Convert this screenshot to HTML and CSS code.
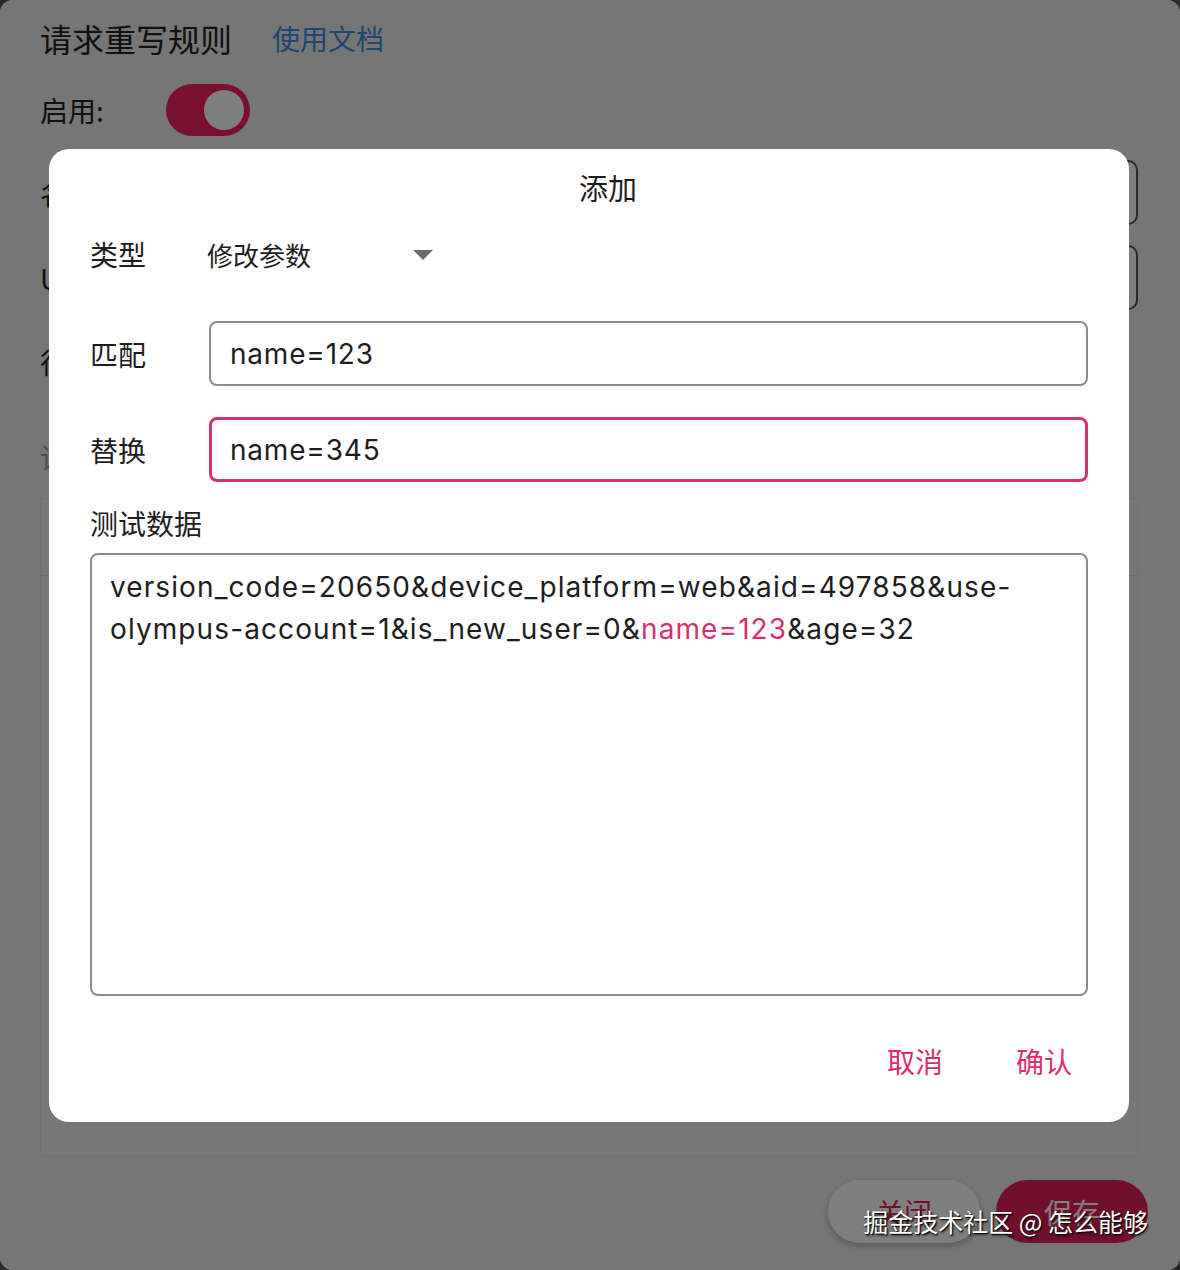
FILE: index.html
```html
<!DOCTYPE html>
<html lang="zh-CN">
<head>
<meta charset="utf-8">
<title>请求重写规则</title>
<link rel="stylesheet" href="styles.css">
</head>
<body>
<div class="window">
  <div class="page">
    <div class="header">
      <h1 class="title">请求重写规则</h1>
      <a class="doc-link">使用文档</a>
    </div>
    <div class="enable-row">
      <span class="enable-label">启用:</span>
      <span class="toggle"><span class="knob"></span></span>
    </div>
    <div class="field">
      <span class="field-label">名称</span>
      <span class="field-input"></span>
    </div>
    <div class="field">
      <span class="field-label">URL</span>
      <span class="field-input"></span>
    </div>
    <div class="field field-plain">
      <span class="field-label">行为</span>
    </div>
    <div class="hint">请求规则</div>
    <div class="card">
      <div class="card-head"></div>
    </div>
    <div class="page-actions">
      <button class="btn btn-close">关闭</button>
      <button class="btn btn-save">保存</button>
    </div>
  </div>

  <div class="overlay"></div>

  <div class="dialog">
    <div class="dialog-title">添加</div>
    <div class="row row-type">
      <span class="label">类型</span>
      <div class="select">
        <span class="select-value">修改参数</span>
        <span class="caret"></span>
      </div>
    </div>
    <div class="row row-input">
      <span class="label">匹配</span>
      <div class="input">name=123</div>
    </div>
    <div class="row row-input row-replace">
      <span class="label">替换</span>
      <div class="input input-focus">name=345</div>
    </div>
    <div class="test-label">测试数据</div>
    <div class="textarea">version_code=20650&amp;device_platform=web&amp;aid=497858&amp;use-olympus-account=1&amp;is_new_user=0&amp;<span class="hl">name=123</span>&amp;age=32</div>
    <div class="dialog-actions">
      <button class="text-btn">取消</button>
      <button class="text-btn">确认</button>
    </div>
  </div>

  <div class="watermark">掘金技术社区 @ 怎么能够</div>
</div>
</body>
</html>
```

FILE: styles.css
```css
* { box-sizing: border-box; }

html, body {
  margin: 0;
  padding: 0;
  background: #2a2a2a;
}

body {
  font-family: "Inter", "Noto Sans CJK SC", sans-serif;
  color: #1d1d1d;
}

.window {
  position: relative;
  width: 1180px;
  height: 1270px;
  border-radius: 13px;
  overflow: hidden;
  background: #ececec;
}

/* ---------- background page ---------- */
.page {
  padding: 0 42px 0 40px;
  font-family: "Noto Sans CJK SC", sans-serif;
}

.header {
  display: flex;
  align-items: center;
  height: 76px;
  gap: 40px;
}

.title {
  margin: 0;
  font-size: 32px;
  font-weight: 400;
  color: #222;
}

.doc-link {
  font-size: 28px;
  color: #3a8ee0;
}

.enable-row {
  display: flex;
  align-items: center;
  height: 68px;
  gap: 62px;
}

.enable-label {
  font-size: 28px;
  color: #222;
}

.toggle {
  display: flex;
  align-items: center;
  justify-content: flex-end;
  width: 84px;
  height: 52px;
  border-radius: 26px;
  background: #f0225f;
  padding-right: 6px;
}

.knob {
  width: 40px;
  height: 40px;
  border-radius: 50%;
  background: #fff;
}

.field {
  display: flex;
  align-items: center;
  height: 65px;
  margin-top: 16px;
  gap: 20px;
}

.field + .field { margin-top: 20px; }

.field-label {
  width: 120px;
  font-size: 28px;
  color: #222;
}

.field-input {
  flex: 1;
  height: 65px;
  border: 2px solid #555;
  border-radius: 10px;
  background: #fff;
}

.field-plain { height: 64px; }

.hint {
  margin-top: 43px;
  font-size: 28px;
  line-height: 40px;
  color: #9a9a9a;
}

.card {
  margin-top: 21px;
  height: 659px;
  border: 1px solid #e2e2e2;
  background: #eeeeee;
}

.card-head {
  height: 77px;
  border-bottom: 1px solid #dedede;
}

.page-actions {
  display: flex;
  justify-content: flex-end;
  gap: 16px;
  margin-top: 23px;
  margin-right: -10px;
}

.btn {
  width: 152px;
  height: 63px;
  border: none;
  border-radius: 32px;
  font-family: "Noto Sans CJK SC", sans-serif;
  font-size: 28px;
}

.btn-close {
  background: #fff;
  color: #e0205a;
  box-shadow: 0 3px 6px rgba(0, 0, 0, 0.25);
}

.btn-save {
  background: #e0205a;
  color: #fff;
}

.overlay {
  position: absolute;
  inset: 0;
  background: rgba(0, 0, 0, 0.5);
}

/* ---------- dialog ---------- */
.dialog {
  position: absolute;
  left: 49px;
  top: 149px;
  width: 1080px;
  height: 973px;
  background: #fff;
  border-radius: 20px;
  padding: 18px 41px 0 41px;
  font-family: "Noto Sans CJK SC", sans-serif;
}

.dialog-title {
  height: 42px;
  line-height: 40px;
  text-align: center;
  padding-left: 38px;
  font-size: 29px;
  color: #1d1d1d;
}

.row {
  display: flex;
  align-items: center;
}

.label {
  width: 119px;
  flex: none;
  font-size: 28px;
  color: #1d1d1d;
}

.row-type { height: 90px; }

.select {
  display: flex;
  align-items: center;
  justify-content: space-between;
  width: 226px;
  margin-left: -2px;
}

.select-value {
  font-size: 26px;
  color: #1d1d1d;
}

.caret {
  width: 0;
  height: 0;
  border-left: 10px solid transparent;
  border-right: 10px solid transparent;
  border-top: 10px solid #6b6b6b;
  margin-top: 2px;
}

.row-input {
  height: 65px;
  margin-top: 22px;
}

.row-replace { margin-top: 31px; }

.input {
  flex: 1;
  height: 65px;
  border: 2px solid #8c8c8c;
  border-radius: 8px;
  padding-left: 19px;
  display: flex;
  align-items: center;
  font-family: "Inter", sans-serif;
  font-size: 28px;
  letter-spacing: 0.8px;
  color: #1d1d1d;
}

.input-focus {
  border: 3px solid #d9306b;
  padding-left: 18px;
}

.test-label {
  margin-top: 21px;
  height: 40px;
  line-height: 40px;
  font-size: 28px;
  color: #1d1d1d;
}

.textarea {
  margin-top: 10px;
  height: 443px;
  border: 2px solid #8c8c8c;
  border-radius: 8px;
  padding: 11px 20px 0 18px;
  font-family: "Inter", sans-serif;
  font-size: 28px;
  line-height: 42px;
  letter-spacing: 1.1px;
  color: #1d1d1d;
}

.hl { color: #d9306b; }

.dialog-actions {
  display: flex;
  justify-content: flex-end;
  gap: 41px;
  margin-top: 45px;
  margin-right: 0;
}

.text-btn {
  border: none;
  background: none;
  padding: 0 16px;
  height: 40px;
  font-family: "Noto Sans CJK SC", sans-serif;
  font-size: 28px;
  color: #d9306b;
}

.watermark {
  position: absolute;
  right: 32px;
  top: 1203px;
  font-family: "Noto Sans CJK SC", sans-serif;
  font-size: 25px;
  color: #fff;
  text-shadow: 1px 1px 1px #000, 1px 2px 3px rgba(0, 0, 0, 0.6);
  white-space: nowrap;
}
```
